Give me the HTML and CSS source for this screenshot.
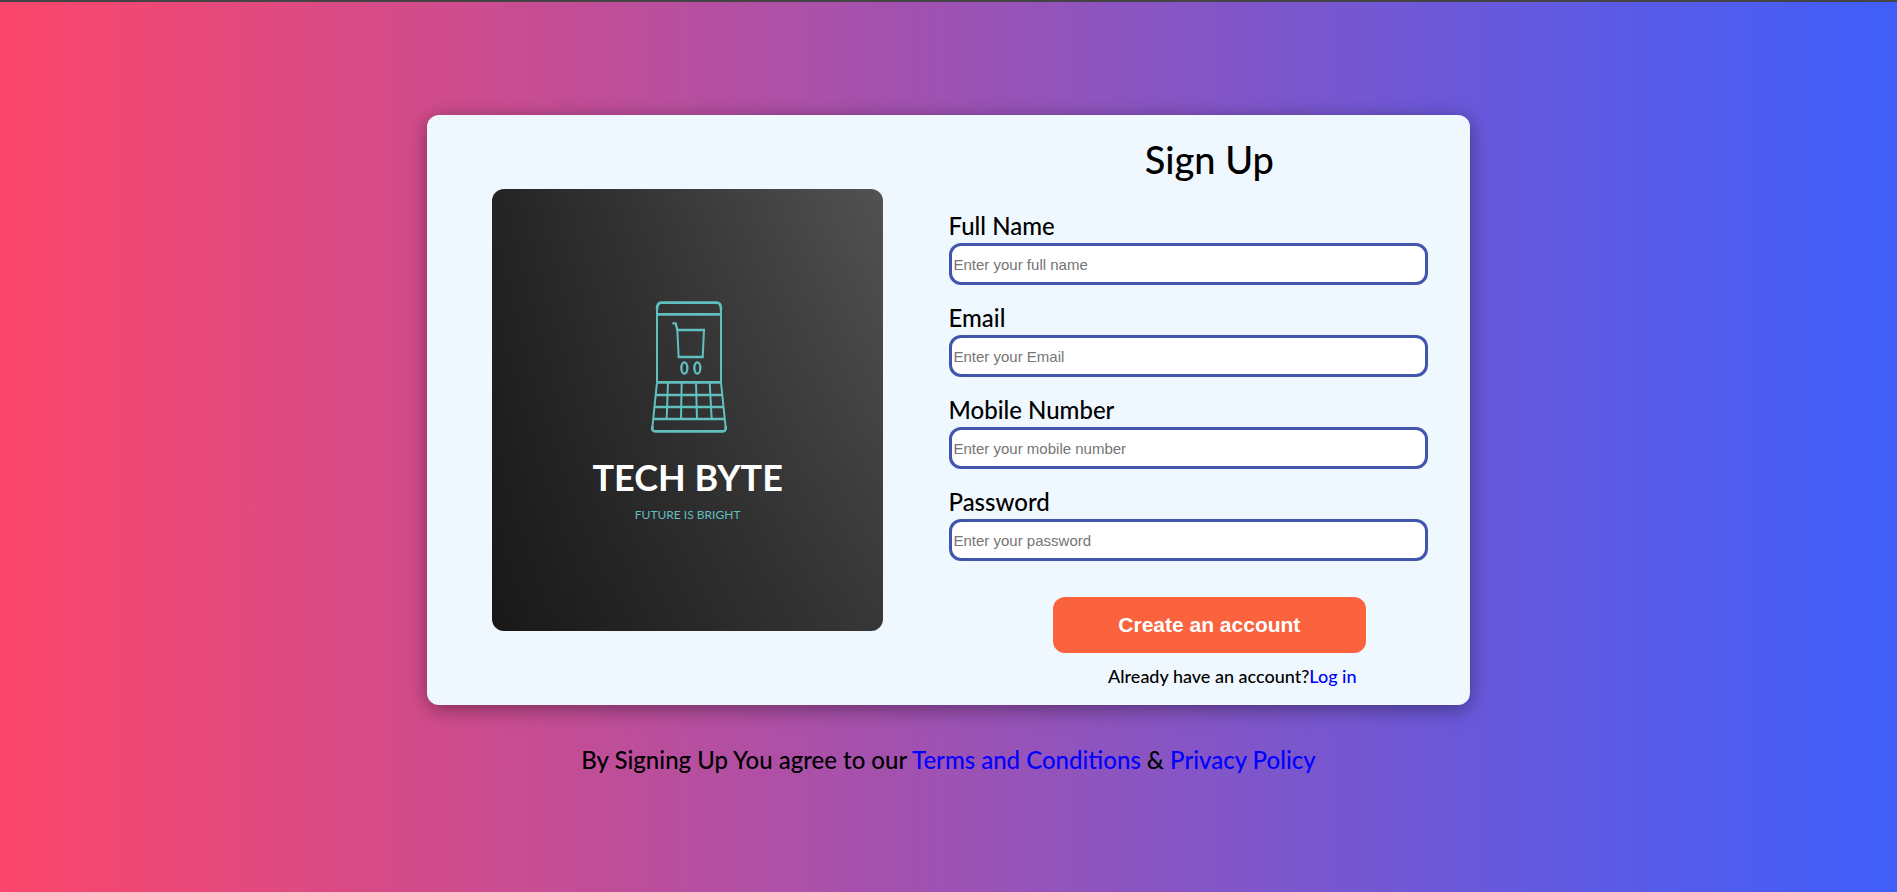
FILE: index.html
```html
<!DOCTYPE html>
<html lang="en">
<head>
<meta charset="utf-8">
<title>Tech Byte - Sign Up</title>
<link rel="stylesheet" href="styles.css">
</head>
<body>
<main class="page">
  <section class="card">
    <div class="brand">
      <div class="brand-panel">
        <svg class="brand-icon" viewBox="-4 0 300 450" fill="none" stroke="#62bfbf" aria-hidden="true">
          <g stroke-width="6">
            <path d="M53 274V52M245 274V52"/>
            <path d="M53 274L39 410M245 274L259 410"/>
            <path d="M86 274L82 384M127 274L125 384M170 274L173 384M211 274L217 384"/>
            <path d="M114 118L118 198M194 118L190 198"/>
          </g>
          <g stroke-width="8">
            <path d="M53 56Q53 35 66 35H232Q245 35 245 56"/>
            <path d="M53 70H245M53 274H245M49 312H249M45 348H253M42 384H256"/>
            <path d="M39 406Q37 421 48 421H250Q261 421 259 406"/>
            <path d="M111 117H197M115 198H193"/>
            <path d="M99 97H109L114 117" stroke-width="7"/>
          </g>
          <ellipse cx="135" cy="231" rx="9" ry="17" stroke-width="7"/>
          <ellipse cx="174" cy="231" rx="9" ry="17" stroke-width="7"/>
        </svg>
        <div class="brand-name">TECH BYTE</div>
        <div class="brand-tagline">FUTURE IS BRIGHT</div>
      </div>
    </div>
    <form class="signup">
      <h1 class="title">Sign Up</h1>
      <div class="field">
        <label class="label" for="name">Full Name</label>
        <input class="input" id="name" type="text" placeholder="Enter your full name">
      </div>
      <div class="field">
        <label class="label" for="email">Email</label>
        <input class="input" id="email" type="email" placeholder="Enter your Email">
      </div>
      <div class="field">
        <label class="label" for="mobile">Mobile Number</label>
        <input class="input" id="mobile" type="tel" placeholder="Enter your mobile number">
      </div>
      <div class="field">
        <label class="label" for="password">Password</label>
        <input class="input" id="password" type="password" placeholder="Enter your password">
      </div>
      <button class="submit" type="submit">Create an account</button>
      <p class="login">Already have an account?<a class="link" href="#">Log in</a></p>
    </form>
  </section>
  <p class="terms">By Signing Up You agree to our <a class="link" href="#">Terms and Conditions</a> &amp; <a class="link" href="#">Privacy Policy</a></p>
</main>
</body>
</html>
```
FILE: styles.css
```css
* {
  box-sizing: border-box;
}

body {
  margin: 0;
  min-height: 100vh;
  border-top: 2px solid #444;
  background: linear-gradient(to right, #fc466b, #3f5efb);
  font-family: Lato, "Open Sans", sans-serif;
  font-weight: 500;
  color: #000;
}

.page {
  display: flex;
  flex-direction: column;
  align-items: center;
  padding: 113px 0 48px;
}

.card {
  display: grid;
  grid-template-columns: 1fr 1fr;
  width: 55%;
  min-width: 800px;
  border-radius: 12px;
  background: #f0f8ff;
  box-shadow: 0 4px 20px rgba(0, 0, 0, 0.4);
}

.brand {
  display: flex;
  align-items: center;
  justify-content: center;
}

.brand-panel {
  display: flex;
  flex-direction: column;
  align-items: center;
  width: 75%;
  height: 75%;
  padding-top: 102px;
  border-radius: 12px;
  background:
    linear-gradient(to bottom, transparent, rgba(0, 0, 0, 0.33)),
    linear-gradient(to right, #242424, #525252);
}

.brand-icon {
  width: 100px;
  height: 150px;
}

.brand-name {
  margin-top: 12px;
  font-size: 36px;
  font-weight: 700;
  line-height: 48px;
  color: #fff;
}

.brand-tagline {
  margin-top: 6px;
  font-size: 12px;
  font-weight: 400;
  line-height: 16px;
  color: #62bfbf;
}

.signup {
  display: flex;
  flex-direction: column;
  padding: 20px 0 18px;
}

.title {
  align-self: center;
  margin: 0 0 28px;
  font-size: 38px;
  font-weight: 500;
  line-height: 48px;
}

.field {
  display: flex;
  flex-direction: column;
  gap: 3px;
  width: 92%;
  margin-bottom: 18px;
}

.label {
  font-size: 24px;
  line-height: 29px;
}

.input {
  height: 42px;
  padding: 0 2px;
  border: 3px solid #4255ae;
  border-radius: 12px;
  background: #fff;
  font: 15px "Liberation Sans", sans-serif;
}

.input::placeholder {
  color: #757575;
}

.submit {
  align-self: center;
  width: 60%;
  height: 56px;
  margin-top: 18px;
  border: 0;
  border-radius: 12px;
  background: #fa633d;
  font: bold 21px "Liberation Sans", sans-serif;
  color: #fff;
}

.login {
  align-self: center;
  margin: 12px 0 0;
  padding-left: 46px;
  font-size: 18px;
  line-height: 22px;
}

.terms {
  margin: 40px 0 0;
  font-size: 24px;
  line-height: 30px;
}

.link {
  color: #00f;
  text-decoration: none;
}
```
